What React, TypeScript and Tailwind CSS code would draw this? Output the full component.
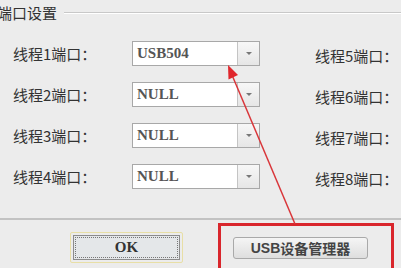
import React from "react";

const leftRows = ["USB504", "NULL", "NULL", "NULL"];

// one combobox row: label, combo, right-hand label
function PortRow({ n, value }: { n: number; value: string }) {
  return (
    <div className="flex items-center h-[25px]">
      <div className="w-[132px] pl-[13px] text-[15px] leading-none text-[#333]">
        线程{n}端口：
      </div>
      <div className="flex w-[128px] h-[25px] border border-[#a8a8a8] bg-white">
        <div className="flex-1 flex items-center pl-[4px] font-['Liberation_Serif',serif] text-[15px] font-semibold text-[#555]">
          {value}
        </div>
        <div className="w-[22px] flex items-center justify-center border-l border-[#c4c4c4] bg-gradient-to-b from-[#f7f7f7] to-[#e6e6e6]">
          <span className="block w-0 h-0 border-l-[3px] border-r-[3px] border-t-[3px] border-l-transparent border-r-transparent border-t-[#777]" />
        </div>
      </div>
      <div className="ml-[55px] mt-[3px] text-[15px] leading-none text-[#333]">
        线程{n + 4}端口：
      </div>
    </div>
  );
}

export default function App() {
  return (
    <div className="relative w-[401px] h-[268px] overflow-hidden bg-[#ececec] font-['Noto_Sans_CJK_SC',sans-serif]">
      {/* group box */}
      <div className="h-[220px] border-b-2 border-b-[#c2c2c2]">
        <div className="flex items-center h-[24px] -ml-[3px]">
          <span className="text-[15px] leading-none text-[#333]">端口设置</span>
          <div className="flex-1 ml-[7px] mt-[1px] h-[2px] bg-[#c8c8c8] border-b border-white" />
        </div>
        <div className="flex flex-col gap-[16px] pt-[17px]">
          {leftRows.map((v, i) => (
            <PortRow key={i} n={i + 1} value={v} />
          ))}
        </div>
      </div>

      {/* buttons */}
      <div className="flex items-start pt-[12px]">
        <div className="ml-[70px] w-[113px] h-[31px] p-[2px] border border-[#e8dfa6] rounded-[2px]">
          <div className="w-full h-full border border-[#8c8c8c] bg-[#e4e7e9] p-[1px]">
            <div className="w-full h-full border border-dotted border-[#777] flex items-center justify-center font-['Liberation_Serif',serif] text-[15px] font-bold text-[#333]">
              OK
            </div>
          </div>
        </div>
        <div className="ml-[50px] mt-[5px] w-[135px] h-[22px] flex items-center justify-center border border-[#a9a9a9] rounded-[3px] bg-gradient-to-b from-[#f5f5f5] to-[#dedede] text-[14px] leading-none font-semibold text-[#444]">
          <span className="font-['Liberation_Sans',sans-serif]">USB</span>设备管理器
        </div>
      </div>

      {/* annotation: red box and arrow */}
      <div className="absolute left-[218px] top-[223px] w-[176px] h-[60px] border-[3px] border-[#d9262c]" />
      <svg className="absolute left-0 top-0" width={401} height={268}>
        <line x1={295} y1={224} x2={232} y2={75} stroke="#d9363a" strokeWidth={1.5} />
        <polygon points="228,65 238,75 228.5,79.5" fill="#e0262c" />
      </svg>
    </div>
  );
}
